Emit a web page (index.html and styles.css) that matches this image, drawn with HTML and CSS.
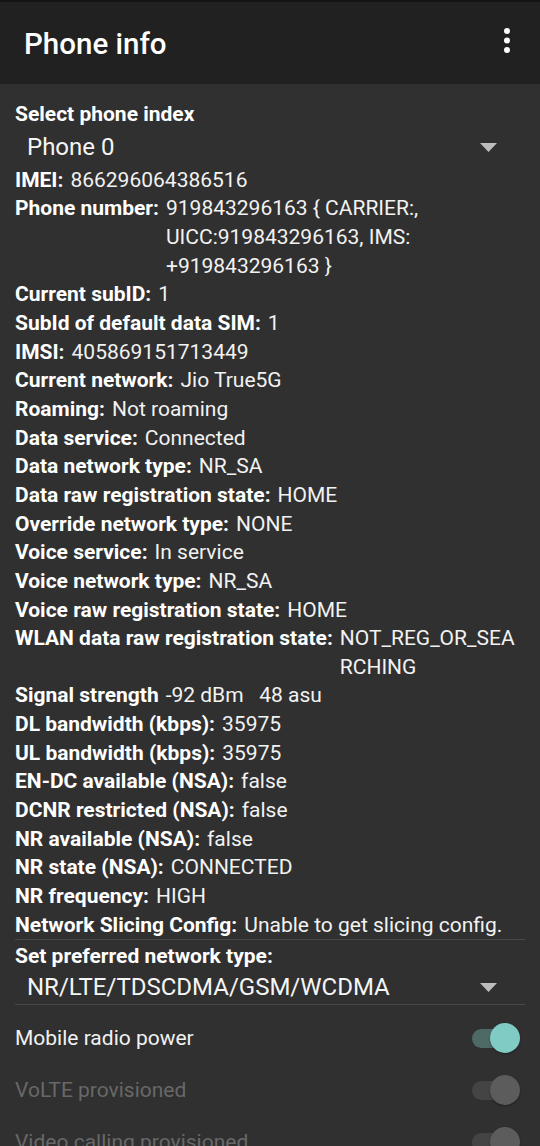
FILE: index.html
```html
<!DOCTYPE html>
<html>
<head>
<meta charset="utf-8">
<link rel="stylesheet" href="styles.css">
</head>
<body>
<header class="appbar">
  <h1 class="title">Phone info</h1>
  <svg class="overflow" width="10" height="28" viewBox="0 0 10 28"><circle cx="5" cy="4" r="3" fill="#fff"/><circle cx="5" cy="13.5" r="3" fill="#fff"/><circle cx="5" cy="23" r="3" fill="#fff"/></svg>
</header>
<main class="content">
  <div class="heading">Select phone index</div>
  <div class="spinner">
    <span class="spinner-text">Phone 0</span>
    <svg class="arrow" width="17" height="9" viewBox="0 0 17 9"><path d="M0 0H17L8.5 9Z" fill="#bdbdbd"/></svg>
  </div>
  <div class="row"><span class="label">IMEI:</span><span class="value">866296064386516</span></div>
  <div class="row"><span class="label">Phone number:</span><span class="value">919843296163 { CARRIER:, UICC:919843296163, IMS: +919843296163 }</span></div>
  <div class="row"><span class="label">Current subID:</span><span class="value">1</span></div>
  <div class="row"><span class="label">SubId of default data SIM:</span><span class="value">1</span></div>
  <div class="row"><span class="label">IMSI:</span><span class="value">405869151713449</span></div>
  <div class="row"><span class="label">Current network:</span><span class="value">Jio True5G</span></div>
  <div class="row"><span class="label">Roaming:</span><span class="value">Not roaming</span></div>
  <div class="row"><span class="label">Data service:</span><span class="value">Connected</span></div>
  <div class="row"><span class="label">Data network type:</span><span class="value">NR_SA</span></div>
  <div class="row"><span class="label">Data raw registration state:</span><span class="value">HOME</span></div>
  <div class="row"><span class="label">Override network type:</span><span class="value">NONE</span></div>
  <div class="row"><span class="label">Voice service:</span><span class="value">In service</span></div>
  <div class="row"><span class="label">Voice network type:</span><span class="value">NR_SA</span></div>
  <div class="row"><span class="label">Voice raw registration state:</span><span class="value">HOME</span></div>
  <div class="row"><span class="label">WLAN data raw registration state:</span><span class="value">NOT_REG_OR_SEARCHING</span></div>
  <div class="row"><span class="label">Signal strength</span><span class="value pre">-92 dBm   48 asu</span></div>
  <div class="row"><span class="label">DL bandwidth (kbps):</span><span class="value">35975</span></div>
  <div class="row"><span class="label">UL bandwidth (kbps):</span><span class="value">35975</span></div>
  <div class="row"><span class="label">EN-DC available (NSA):</span><span class="value">false</span></div>
  <div class="row"><span class="label">DCNR restricted (NSA):</span><span class="value">false</span></div>
  <div class="row"><span class="label">NR available (NSA):</span><span class="value">false</span></div>
  <div class="row"><span class="label">NR state (NSA):</span><span class="value">CONNECTED</span></div>
  <div class="row"><span class="label">NR frequency:</span><span class="value">HIGH</span></div>
  <div class="row"><span class="label">Network Slicing Config:</span><span class="value">Unable to get slicing config.</span></div>
  <div class="divider"></div>
  <div class="heading">Set preferred network type:</div>
  <div class="spinner spinner-lined">
    <span class="spinner-text">NR/LTE/TDSCDMA/GSM/WCDMA</span>
    <svg class="arrow" width="17" height="9" viewBox="0 0 17 9"><path d="M0 0H17L8.5 9Z" fill="#bdbdbd"/></svg>
  </div>
  <div class="toggles">
    <div class="toggle-row">
      <span class="toggle-label">Mobile radio power</span>
      <span class="switch on"><span class="track"></span><span class="thumb"></span></span>
    </div>
    <div class="toggle-row disabled">
      <span class="toggle-label">VoLTE provisioned</span>
      <span class="switch"><span class="track"></span><span class="thumb"></span></span>
    </div>
    <div class="toggle-row disabled">
      <span class="toggle-label">Video calling provisioned</span>
      <span class="switch"><span class="track"></span><span class="thumb"></span></span>
    </div>
  </div>
</main>
</body>
</html>
```
FILE: styles.css
```css
* { box-sizing: border-box; }
html, body {
  margin: 0;
  padding: 0;
  background: #303030;
  font-family: Roboto, "Noto Sans", "Liberation Sans", sans-serif;
  color: #fff;
  overflow: hidden;
  height: 1146px;
}
.appbar {
  height: 84px;
  background: #212121;
  border-top: 2px solid #141414;
  display: flex;
  align-items: center;
  justify-content: space-between;
  padding: 0 28px 0 24px;
}
.title {
  margin: 0;
  font-size: 29.5px;
  font-weight: 500;
  letter-spacing: 0;
  margin-top: 1px;
}
.overflow { display: block; margin-top: -4px; }
.content {
  padding: 16px 15px 0 15px;
  font-size: 21px;
  line-height: 28.65px;
}
.heading {
  font-weight: 700;
}
.spinner {
  display: flex;
  align-items: center;
  justify-content: space-between;
  height: 37px;
  padding: 0 28px 0 12px;
}
.spinner-text {
  font-size: 24px;
  color: #f5f5f5;
}
.spinner-lined {
  height: 34px;
  border-bottom: 1px solid #474747;
  margin-bottom: 7px;
}
.arrow { display: block; }
.row {
  display: flex;
  padding-right: 5px;
}
.label {
  font-weight: 700;
  white-space: nowrap;
  margin-right: 7px;
}
.value {
  flex: 1;
  min-width: 0;
  overflow-wrap: anywhere;
  color: #f2f2f2;
}
.pre { white-space: pre; }
.divider {
  height: 1px;
  background: #474747;
  margin: 0 0 2px 0;
}
.toggle-row {
  height: 52px;
  display: flex;
  align-items: center;
  justify-content: space-between;
  padding-right: 5px;
}
.toggle-label { color: #f2f2f2; }
.disabled .toggle-label { color: #686868; }
.switch {
  position: relative;
  width: 48px;
  height: 30px;
  display: block;
}
.track {
  position: absolute;
  left: 0;
  top: 5.5px;
  width: 42px;
  height: 19px;
  border-radius: 10px;
  background: #444;
}
.thumb {
  position: absolute;
  right: 0;
  top: 0;
  width: 30px;
  height: 30px;
  border-radius: 50%;
  background: #5c5c5c;
  box-shadow: 0 1px 2px rgba(0,0,0,0.35);
}
.switch.on .track { background: #4d6a66; }
.switch.on .thumb { background: #80cbc4; }
```
